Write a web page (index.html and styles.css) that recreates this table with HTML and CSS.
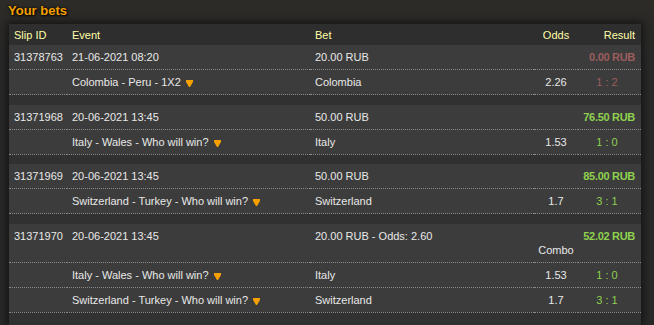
FILE: index.html
```html
<!DOCTYPE html>
<html>
<head>
<meta charset="utf-8">
<link rel="stylesheet" href="styles.css">
</head>
<body>
<div class="page">
  <h1 class="title">Your bets</h1>
  <div class="panel">
    <table class="bets">
      <colgroup>
        <col class="c-id"><col class="c-event"><col class="c-bet"><col class="c-odds"><col class="c-result">
      </colgroup>
      <thead>
        <tr><th class="l">Slip ID</th><th class="l">Event</th><th class="l">Bet</th><th class="c">Odds</th><th class="r">Result</th></tr>
      </thead>
      <tbody>
        <tr class="row"><td>31378763</td><td>21-06-2021 08:20</td><td>20.00 RUB</td><td></td><td class="r amount lose">0.00 RUB</td></tr>
        <tr class="row"><td></td><td>Colombia - Peru - 1X2 <span class="arrow"><svg width="7" height="7" viewBox="0 0 7 7"><path d="M0 0H7V2L4 7H3L0 2Z" fill="#f5a000"/></svg></span></td><td>Colombia</td><td class="c">2.26</td><td class="c score lose">1 : 2</td></tr>
        <tr class="gap"><td colspan="5"></td></tr>

        <tr class="row"><td>31371968</td><td>20-06-2021 13:45</td><td>50.00 RUB</td><td></td><td class="r amount win">76.50 RUB</td></tr>
        <tr class="row"><td></td><td>Italy - Wales - Who will win? <span class="arrow"><svg width="7" height="7" viewBox="0 0 7 7"><path d="M0 0H7V2L4 7H3L0 2Z" fill="#f5a000"/></svg></span></td><td>Italy</td><td class="c">1.53</td><td class="c score win">1 : 0</td></tr>
        <tr class="gap"><td colspan="5"></td></tr>

        <tr class="row"><td>31371969</td><td>20-06-2021 13:45</td><td>50.00 RUB</td><td></td><td class="r amount win">85.00 RUB</td></tr>
        <tr class="row"><td></td><td>Switzerland - Turkey - Who will win? <span class="arrow"><svg width="7" height="7" viewBox="0 0 7 7"><path d="M0 0H7V2L4 7H3L0 2Z" fill="#f5a000"/></svg></span></td><td>Switzerland</td><td class="c">1.7</td><td class="c score win">3 : 1</td></tr>
        <tr class="gap"><td colspan="5"></td></tr>

        <tr class="row combo"><td>31371970</td><td>20-06-2021 13:45</td><td>20.00 RUB - Odds: 2.60</td><td class="c combo-cell">Combo</td><td class="r amount win">52.02 RUB</td></tr>
        <tr class="row"><td></td><td>Italy - Wales - Who will win? <span class="arrow"><svg width="7" height="7" viewBox="0 0 7 7"><path d="M0 0H7V2L4 7H3L0 2Z" fill="#f5a000"/></svg></span></td><td>Italy</td><td class="c">1.53</td><td class="c score win">1 : 0</td></tr>
        <tr class="row"><td></td><td>Switzerland - Turkey - Who will win? <span class="arrow"><svg width="7" height="7" viewBox="0 0 7 7"><path d="M0 0H7V2L4 7H3L0 2Z" fill="#f5a000"/></svg></span></td><td>Switzerland</td><td class="c">1.7</td><td class="c score win">3 : 1</td></tr>
        <tr class="gap"><td colspan="5"></td></tr>
      </tbody>
    </table>
  </div>
</div>
</body>
</html>
```

FILE: styles.css
```css
html, body {
  margin: 0;
  padding: 0;
}
body {
  background: #2a2a2a;
  font-family: "Liberation Sans", Arial, sans-serif;
  font-size: 11px;
  color: #e8e8e8;
  overflow: hidden;
}
.page {
  background: linear-gradient(180deg, #2e2b27 0px, #2b2a28 24px, #292929 60px, #292929 100%);
  height: 325px;
  overflow: hidden;
}
.title {
  margin: 0;
  height: 24px;
  padding-left: 8px;
  font-size: 13px;
  font-weight: bold;
  line-height: 22px;
  color: #f5a000;
  text-shadow: 1px 1px 2px #000, 0 0 3px #000;
}
.panel {
  margin-left: 9px;
  width: 632px;
  height: 301px;
  background: #303030;
  box-shadow: 0 0 8px 2px rgba(0, 0, 0, 0.55);
}
.bets {
  width: 632px;
  border-collapse: collapse;
  table-layout: fixed;
}
.c-id { width: 58px; }
.c-event { width: 243px; }
.c-bet { width: 224px; }
.c-odds { width: 44px; }
.c-result { width: 63px; }
th {
  height: 21px;
  padding: 1px 5px 0;
  font-weight: normal;
  color: #ffffa8;
  background: #2e2e2e;
  line-height: 14px;
  box-sizing: border-box;
}
th.l, td { text-align: left; }
.c { text-align: center; }
th.r { text-align: right; padding-right: 6px; }
td {
  height: 24px;
  padding: 5px 5px;
  line-height: 14px;
  background: #3c3c3c;
  border-bottom: 1px dotted #8a8a8a;
  box-sizing: border-box;
  white-space: nowrap;
  vertical-align: top;
}
td.c { text-align: center; padding-left: 0; padding-right: 0; }
td.r { text-align: right; padding-right: 6px; }
.combo td { height: 38px; }
.combo-cell { padding-top: 19px !important; }
.gap td {
  height: 10px;
  padding: 0;
  background: #313131;
  border-bottom: none;
}
.amount { font-weight: bold; letter-spacing: -0.3px; }
.score.c { padding-left: 0; padding-right: 5px; }
.win { color: #8fd14f; }
.lose { color: #9b5e5e; }
.arrow {
  display: inline-block;
  margin-left: 2px;
  vertical-align: -1px;
  line-height: 0;
}
```
